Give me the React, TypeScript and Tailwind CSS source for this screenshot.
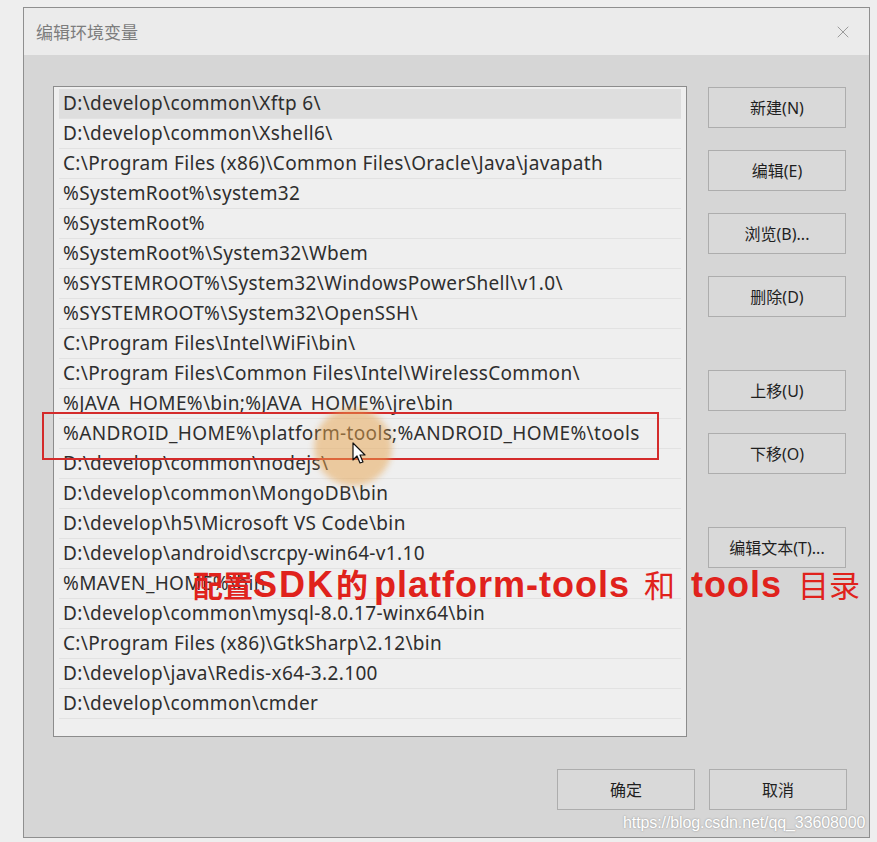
import { X } from "lucide-react";

/* ---------- path entries ---------- */
const paths = [
  "D:\\develop\\common\\Xftp 6\\",
  "D:\\develop\\common\\Xshell6\\",
  "C:\\Program Files (x86)\\Common Files\\Oracle\\Java\\javapath",
  "%SystemRoot%\\system32",
  "%SystemRoot%",
  "%SystemRoot%\\System32\\Wbem",
  "%SYSTEMROOT%\\System32\\WindowsPowerShell\\v1.0\\",
  "%SYSTEMROOT%\\System32\\OpenSSH\\",
  "C:\\Program Files\\Intel\\WiFi\\bin\\",
  "C:\\Program Files\\Common Files\\Intel\\WirelessCommon\\",
  "%JAVA_HOME%\\bin;%JAVA_HOME%\\jre\\bin",
  "%ANDROID_HOME%\\platform-tools;%ANDROID_HOME%\\tools",
  "D:\\develop\\common\\nodejs\\",
  "D:\\develop\\common\\MongoDB\\bin",
  "D:\\develop\\h5\\Microsoft VS Code\\bin",
  "D:\\develop\\android\\scrcpy-win64-v1.10",
  "%MAVEN_HOME%\\bin",
  "D:\\develop\\common\\mysql-8.0.17-winx64\\bin",
  "C:\\Program Files (x86)\\GtkSharp\\2.12\\bin",
  "D:\\develop\\java\\Redis-x64-3.2.100",
  "D:\\develop\\common\\cmder",
];

const uiFont = { fontFamily: '"Noto Sans", "Noto Sans CJK SC", sans-serif' };

function WinButton({ label, className = "" }: { label: string; className?: string }) {
  return (
    <button
      className={`h-[41px] w-[138px] border border-[#adadad] bg-[#d9d9d9] text-[16px] text-[#1f1f1f] ${className}`}
      style={uiFont}
    >
      {label}
    </button>
  );
}

export default function App() {
  return (
    <div className="relative h-[842px] w-[877px] overflow-hidden bg-[#eeeeee] pl-[23px] pt-[7px]">
      {/* Dialog */}
      <div className="flex h-[831px] w-[847px] flex-col border border-[#8f8f8f] bg-[#d6d6d6]">
        {/* Title bar */}
        <div className="flex h-[47px] items-center justify-between bg-[#ebebeb] pl-[12px] pr-[16px]">
          <span
            className="text-[17px] text-[#7d7d7d]"
            style={{ fontFamily: '"Noto Sans CJK SC", sans-serif' }}
          >
            编辑环境变量
          </span>
          <X className="h-[20px] w-[20px] text-[#8a8a8a]" strokeWidth={1} />
        </div>

        {/* Body */}
        <div className="flex pl-[29px] pt-[31px]">
          {/* List */}
          <div className="h-[651px] w-[634px] border border-[#8c8c8c] bg-[#efefef] px-[5px] pt-[2px]">
            {paths.map((p, i) => (
              <div
                key={p}
                className={`flex h-[30px] items-center whitespace-nowrap border-b border-[#e2e2e2] pl-[4px] text-[19px] tracking-[0.35px] text-[#2e2e2e] ${
                  i === 0 ? "bg-[#dedede]" : ""
                }`}
                style={uiFont}
              >
                {p}
              </div>
            ))}
          </div>

          {/* Side buttons */}
          <div className="ml-[21px] flex flex-col pt-[1px]">
            <WinButton label="新建(N)" />
            <WinButton label="编辑(E)" className="mt-[22px]" />
            <WinButton label="浏览(B)..." className="mt-[22px]" />
            <WinButton label="删除(D)" className="mt-[22px]" />
            <WinButton label="上移(U)" className="mt-[53px]" />
            <WinButton label="下移(O)" className="mt-[22px]" />
            <WinButton label="编辑文本(T)..." className="mt-[53px]" />
          </div>
        </div>

        {/* Footer */}
        <div className="mt-[32px] flex justify-end gap-[14px] pr-[22px]">
          <WinButton label="确定" />
          <WinButton label="取消" />
        </div>
      </div>

      {/* Red highlight box */}
      <div className="absolute left-[42px] top-[412px] h-[48px] w-[617px] border-2 border-[#d42b2b]" />

      {/* Cursor halo */}
      <div className="absolute left-[314px] top-[408px] h-[78px] w-[78px] rounded-full bg-[#e8a34e]/50 blur-[3px]" />

      {/* Cursor */}
      <svg
        className="absolute left-[352px] top-[442px]"
        width="16"
        height="24"
        viewBox="0 0 16 24"
      >
        <path
          d="M1 1 L1 18 L5 14 L8 21 L11 20 L8 13 L13 13 Z"
          fill="#ffffff"
          stroke="#111111"
          strokeWidth="1.2"
          strokeLinejoin="round"
        />
      </svg>

      {/* Annotation */}
      <div
        className="absolute left-[193px] top-[567px] flex items-baseline whitespace-nowrap font-bold leading-none text-[#e0221c]"
        style={{ fontFamily: '"Liberation Sans", "Noto Sans CJK SC", sans-serif' }}
      >
        <span className="text-[30px]">配置</span>
        <span className="text-[36px] tracking-[2px]">SDK</span>
        <span className="ml-[1px] text-[32px]">的</span>
        <span className="ml-[6px] text-[36px] tracking-[1px]">platform-tools</span>
        <span className="ml-[14px] text-[31px] font-normal">和</span>
        <span className="ml-[16px] text-[36px] tracking-[1px]">tools</span>
        <span className="ml-[16px] text-[31px] font-normal">目录</span>
      </div>

      {/* Watermark */}
      <div
        className="absolute left-[623px] top-[811px] text-[16px] tracking-[-0.1px] text-white"
        style={{
          fontFamily: '"Liberation Sans", sans-serif',
          textShadow: "0 0 2px #8a8a8a",
        }}
      >
        https://blog.csdn.net/qq_33608000
      </div>
    </div>
  );
}
